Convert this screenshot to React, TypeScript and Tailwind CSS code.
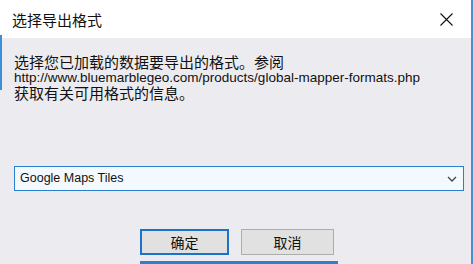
import React from "react";

export default function App() {
  const cjk = { fontFamily: '"Noto Sans CJK SC", "Noto Sans", sans-serif' };
  const latin = { fontFamily: '"Liberation Sans", Arial, sans-serif' };
  return (
    <div className="relative w-[473px] h-[264px] overflow-hidden bg-[#ececf0] flex flex-col">
      {/* title bar */}
      <div className="h-[38px] bg-white flex items-center justify-between pl-[12px] pr-[20px] shrink-0">
        <span className="text-[15px] leading-none text-[#111] mt-[1px]" style={cjk}>选择导出格式</span>
        <svg width="13" height="13" viewBox="0 0 13 13" className="mt-[1px]">
          <path d="M0.5 0.5 L12.5 12.5 M12.5 0.5 L0.5 12.5" stroke="#111" strokeWidth="1.1" fill="none" />
        </svg>
      </div>
      {/* body */}
      <div className="flex-1 flex flex-col pl-[14px] pr-[9px] pt-[16px]">
        <div className="text-[15px] leading-[16px] text-[#111] whitespace-nowrap" style={cjk}>选择您已加载的数据要导出的格式。参阅</div>
        <div className="text-[13.5px] leading-[15px] text-[#111] whitespace-nowrap" style={latin}>http://www.bluemarblegeo.com/products/global-mapper-formats.php</div>
        <div className="text-[15px] leading-[16px] text-[#111] whitespace-nowrap" style={cjk}>获取有关可用格式的信息。</div>
        <div className="mt-[65px] h-[25px] w-[450px] border border-[#2a7fd0] bg-[#f4f9fe] flex items-center justify-between pl-[5px] pr-[6px]">
          <span className="text-[12.5px] text-[#111]" style={latin}>Google Maps Tiles</span>
          <svg width="10" height="6" viewBox="0 0 10 6">
            <path d="M1 1 L5 5 L9 1" stroke="#444" strokeWidth="1.3" fill="none" />
          </svg>
        </div>
        <div className="mt-[38px] flex gap-[12px] pl-[126px]">
          <div className="w-[89px] h-[26px] border-2 border-[#1a73c9] bg-[#e1e1e1] flex items-center justify-center">
            <span className="text-[14px] text-[#111]" style={cjk}>确定</span>
          </div>
          <div className="w-[93px] h-[26px] border border-[#adadad] bg-[#e1e1e1] flex items-center justify-center">
            <span className="text-[14px] text-[#111]" style={cjk}>取消</span>
          </div>
        </div>
      </div>
      {/* background window edges */}
      <div className="absolute left-0 top-[35px] w-[2px] h-[55px] bg-[#3c8fd8]" />
      <div className="absolute right-0 top-0 w-[2px] h-[264px] bg-[#4a90d0]" />
      <div className="absolute left-[140px] bottom-0 w-[198px] h-[3px] bg-[#2f7fcf]" />
    </div>
  );
}
